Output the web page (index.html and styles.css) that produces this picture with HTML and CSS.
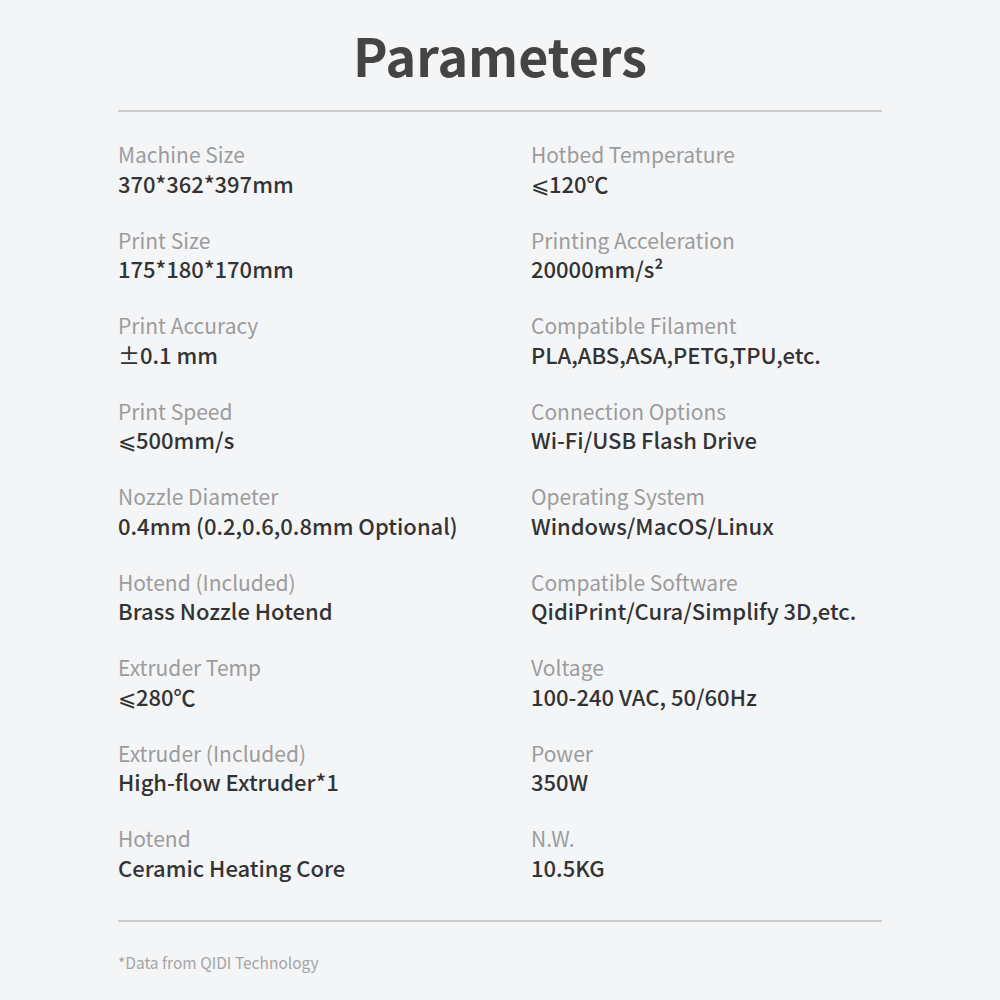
FILE: index.html
```html
<!DOCTYPE html>
<html lang="en">
<head>
<meta charset="utf-8">
<title>Parameters</title>
<link rel="stylesheet" href="styles.css">
</head>
<body>
<main class="page">
  <h1 class="title">Parameters</h1>
  <hr class="rule">
  <div class="specs">
    <div class="spec"><div class="label">Machine Size</div><div class="value">370*362*397mm</div></div>
    <div class="spec"><div class="label">Hotbed Temperature</div><div class="value">⩽120℃</div></div>
    <div class="spec"><div class="label">Print Size</div><div class="value">175*180*170mm</div></div>
    <div class="spec"><div class="label">Printing Acceleration</div><div class="value">20000mm/s²</div></div>
    <div class="spec"><div class="label">Print Accuracy</div><div class="value">±0.1 mm</div></div>
    <div class="spec"><div class="label">Compatible Filament</div><div class="value">PLA,ABS,ASA,PETG,TPU,etc.</div></div>
    <div class="spec"><div class="label">Print Speed</div><div class="value">⩽500mm/s</div></div>
    <div class="spec"><div class="label">Connection Options</div><div class="value">Wi-Fi/USB Flash Drive</div></div>
    <div class="spec"><div class="label">Nozzle Diameter</div><div class="value">0.4mm (0.2,0.6,0.8mm Optional)</div></div>
    <div class="spec"><div class="label">Operating System</div><div class="value">Windows/MacOS/Linux</div></div>
    <div class="spec"><div class="label">Hotend (Included)</div><div class="value">Brass Nozzle Hotend</div></div>
    <div class="spec"><div class="label">Compatible Software</div><div class="value">QidiPrint/Cura/Simplify 3D,etc.</div></div>
    <div class="spec"><div class="label">Extruder Temp</div><div class="value">⩽280℃</div></div>
    <div class="spec"><div class="label">Voltage</div><div class="value">100-240 VAC, 50/60Hz</div></div>
    <div class="spec"><div class="label">Extruder (Included)</div><div class="value">High-flow Extruder*1</div></div>
    <div class="spec"><div class="label">Power</div><div class="value">350W</div></div>
    <div class="spec"><div class="label">Hotend</div><div class="value">Ceramic Heating Core</div></div>
    <div class="spec"><div class="label">N.W.</div><div class="value">10.5KG</div></div>
  </div>
  <hr class="rule">
  <p class="note">*Data from QIDI Technology</p>
</main>
</body>
</html>
```
FILE: styles.css
```css
html, body {
  margin: 0;
  padding: 0;
  background: #f4f5f7;
}
body {
  font-family: "Noto Sans CJK SC", "Noto Sans", sans-serif;
  color: #333;
}
.page {
  width: 764px;
  margin: 0 auto;
  padding-top: 20px;
}
.title {
  margin: 0;
  text-align: center;
  font-size: 52px;
  line-height: 70px;
  font-weight: 700;
  color: #444;
}
.rule {
  margin: 20px 0 0;
  border: 0;
  height: 2px;
  background: #cbcbcb;
}
.specs {
  display: grid;
  grid-template-columns: 413px 1fr;
  row-gap: 27.5px;
  padding-top: 28px;
  padding-bottom: 18px;
}
.label {
  font-size: 21px;
  line-height: 28.5px;
  color: #9c9c9c;
}
.value {
  font-size: 22px;
  line-height: 29.5px;
  font-weight: 500;
  color: #333;
}
.note {
  margin: 29px 0 0;
  font-size: 15.5px;
  line-height: 22px;
  color: #a5a5a5;
}
```
